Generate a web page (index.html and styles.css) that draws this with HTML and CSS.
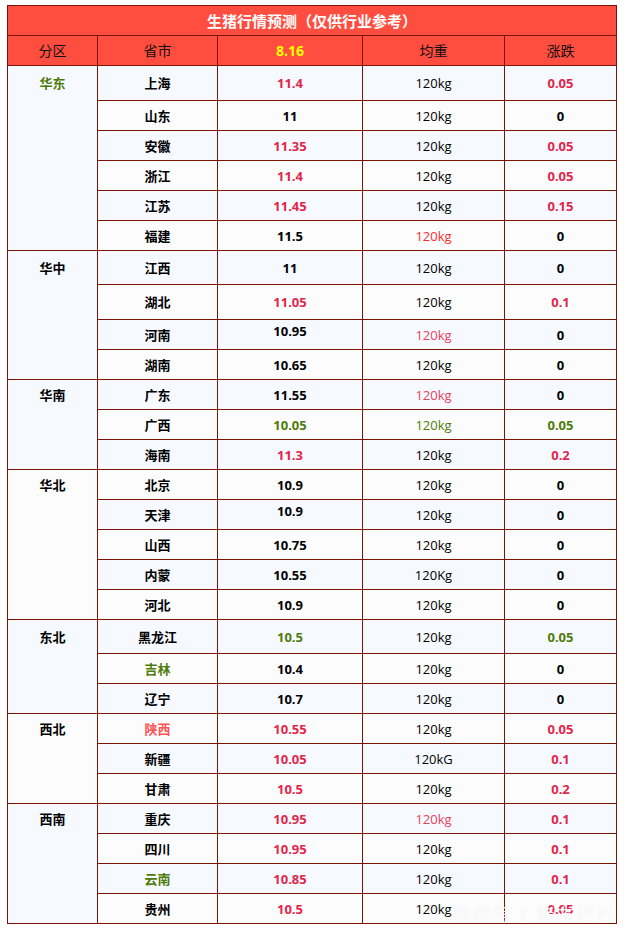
FILE: index.html
```html
<!DOCTYPE html>
<html lang="zh-CN">
<head>
<meta charset="utf-8">
<title>生猪行情预测</title>
<link rel="stylesheet" href="styles.css">
</head>
<body>
<div class="wrap">
<table class="price">
  <colgroup>
    <col class="c1"><col class="c2"><col class="c3"><col class="c4"><col class="c5">
  </colgroup>
  <tr class="title"><td colspan="5">生猪行情预测（仅供行业参考）</td></tr>
  <tr class="head"><td>分区</td><td>省市</td><td class="date">8.16</td><td>均重</td><td>涨跌</td></tr>

  <tr class="b h35"><td class="region b" rowspan="6"><div class="lab l35 green">华东</div></td><td class="prov">上海</td><td class="num red">11.4</td><td class="kg">120kg</td><td class="num red">0.05</td></tr>
  <tr class="w"><td class="prov">山东</td><td class="num">11</td><td class="kg">120kg</td><td class="num">0</td></tr>
  <tr class="b"><td class="prov">安徽</td><td class="num red">11.35</td><td class="kg">120kg</td><td class="num red">0.05</td></tr>
  <tr class="w"><td class="prov">浙江</td><td class="num red">11.4</td><td class="kg">120kg</td><td class="num red">0.05</td></tr>
  <tr class="b"><td class="prov">江苏</td><td class="num red">11.45</td><td class="kg">120kg</td><td class="num red">0.15</td></tr>
  <tr class="w"><td class="prov">福建</td><td class="num">11.5</td><td class="kg bright">120kg</td><td class="num">0</td></tr>

  <tr class="b h34"><td class="region b" rowspan="4"><div class="lab l34">华中</div></td><td class="prov">江西</td><td class="num">11</td><td class="kg">120kg</td><td class="num">0</td></tr>
  <tr class="w h35"><td class="prov">湖北</td><td class="num red">11.05</td><td class="kg">120kg</td><td class="num red">0.1</td></tr>
  <tr class="b"><td class="prov">河南</td><td class="num up">10.95</td><td class="kg pink">120kg</td><td class="num">0</td></tr>
  <tr class="w"><td class="prov">湖南</td><td class="num">10.65</td><td class="kg">120kg</td><td class="num">0</td></tr>

  <tr class="b"><td class="region b" rowspan="3"><div class="lab">华南</div></td><td class="prov">广东</td><td class="num">11.55</td><td class="kg pink">120kg</td><td class="num">0</td></tr>
  <tr class="w"><td class="prov">广西</td><td class="num green">10.05</td><td class="kg green">120kg</td><td class="num green">0.05</td></tr>
  <tr class="b"><td class="prov">海南</td><td class="num red">11.3</td><td class="kg">120kg</td><td class="num red">0.2</td></tr>

  <tr class="w"><td class="region w" rowspan="5"><div class="lab">华北</div></td><td class="prov">北京</td><td class="num">10.9</td><td class="kg">120kg</td><td class="num">0</td></tr>
  <tr class="b"><td class="prov">天津</td><td class="num up">10.9</td><td class="kg">120kg</td><td class="num">0</td></tr>
  <tr class="w"><td class="prov">山西</td><td class="num">10.75</td><td class="kg">120kg</td><td class="num">0</td></tr>
  <tr class="b"><td class="prov">内蒙</td><td class="num">10.55</td><td class="kg">120Kg</td><td class="num">0</td></tr>
  <tr class="w"><td class="prov">河北</td><td class="num">10.9</td><td class="kg">120kg</td><td class="num">0</td></tr>

  <tr class="b h34"><td class="region b" rowspan="3"><div class="lab l34">东北</div></td><td class="prov">黑龙江</td><td class="num green">10.5</td><td class="kg">120kg</td><td class="num green">0.05</td></tr>
  <tr class="w"><td class="prov green">吉林</td><td class="num">10.4</td><td class="kg">120kg</td><td class="num">0</td></tr>
  <tr class="b"><td class="prov">辽宁</td><td class="num">10.7</td><td class="kg">120kg</td><td class="num">0</td></tr>

  <tr class="w"><td class="region w" rowspan="3"><div class="lab">西北</div></td><td class="prov salmon">陕西</td><td class="num red">10.55</td><td class="kg">120kg</td><td class="num red">0.05</td></tr>
  <tr class="b"><td class="prov">新疆</td><td class="num red">10.05</td><td class="kg">120kG</td><td class="num red">0.1</td></tr>
  <tr class="w"><td class="prov">甘肃</td><td class="num red">10.5</td><td class="kg">120kg</td><td class="num red">0.2</td></tr>

  <tr class="b"><td class="region b" rowspan="4"><div class="lab">西南</div></td><td class="prov">重庆</td><td class="num red">10.95</td><td class="kg pink">120kg</td><td class="num red">0.1</td></tr>
  <tr class="w"><td class="prov">四川</td><td class="num red">10.95</td><td class="kg">120kg</td><td class="num red">0.1</td></tr>
  <tr class="b"><td class="prov green">云南</td><td class="num red">10.85</td><td class="kg">120kg</td><td class="num red">0.1</td></tr>
  <tr class="w"><td class="prov">贵州</td><td class="num red">10.5</td><td class="kg">120kg</td><td class="num red">0.05</td></tr>
</table>
<div class="mark">快传号 / 猪友巴巴</div>
</div>
</body>
</html>
```

FILE: styles.css
```css
html, body {
  margin: 0;
  padding: 0;
  background: #ffffff;
}

body {
  padding: 5px 0 0 7px;
  font-family: "Open Sans", "Noto Sans CJK SC", sans-serif;
  font-size: 13px;
  color: #000;
}

.wrap {
  position: relative;
  width: 610px;
}

.price {
  width: 610px;
  table-layout: fixed;
  border-collapse: collapse;
  border: 1px solid #7d1303;
}

.c1 { width: 90px; }
.c2 { width: 120px; }
.c3 { width: 145px; }
.c4 { width: 142px; }
.c5 { width: 112px; }

.price td {
  border: 1px solid #7d1303;
  padding: 0;
  text-align: center;
  vertical-align: middle;
  height: 29px;
  line-height: 16px;
}

.price tr.h34 td { height: 33px; }
.price tr.h35 td { height: 34px; }

.price td.region {
  vertical-align: top;
  height: auto;
}

.price td.up {
  vertical-align: top;
  padding-top: 3px;
  height: 26px;
}

.title td {
  background: #ff4d3f;
  color: #ffffff;
  font-weight: 700;
  font-size: 15px;
}

.head td {
  background: #ff4d3f;
  color: #111;
  font-size: 14px;
}

.head td.date {
  color: #ffff00;
  font-weight: 700;
}

tr.b td, td.b { background: #f6f9ff; }
tr.w td, td.w { background: #fcfcfd; }

.lab {
  font-weight: 700;
  height: 29px;
  display: flex;
  align-items: center;
  justify-content: center;
}
.lab.l34 { height: 33px; }
.lab.l35 { height: 34px; }

.prov { font-weight: 700; }
.num { font-weight: 700; }
.kg { font-weight: 400; }

.red { color: #e1264b; }
.green { color: #4e7c08; }
.pink { color: #ec4159; }
.bright { color: #ff2b2b; }
.salmon { color: #ff5555; }

.mark {
  position: absolute;
  right: 0;
  bottom: -2px;
  font-size: 17px;
  color: rgba(255, 255, 255, 0.9);
  text-shadow: 0 0 1px rgba(200, 200, 200, 0.45);
  letter-spacing: 3px;
  line-height: 22px;
}
```
